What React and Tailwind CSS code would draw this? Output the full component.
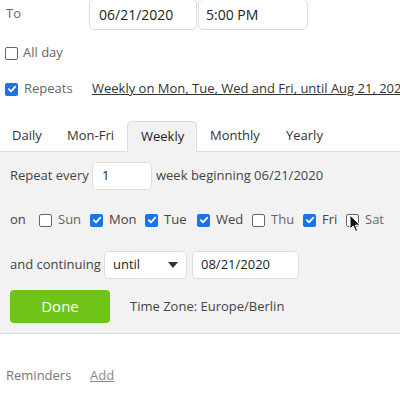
import React from "react";

function Check({ on }) {
  return on ? (
    <span className="inline-flex items-center justify-center w-[13px] h-[13px] rounded-[2px] bg-[#1a73e8] shrink-0">
      <svg width="10" height="10" viewBox="0 0 10 10">
        <path d="M1.8 5.2 L4 7.3 L8.3 2.6" stroke="white" strokeWidth="1.8" fill="none" strokeLinecap="round" strokeLinejoin="round" />
      </svg>
    </span>
  ) : (
    <span className="inline-block w-[13px] h-[13px] rounded-[2px] border border-[#666] bg-white shrink-0" />
  );
}

function Day({ label, on, w }) {
  return (
    <div className={`flex items-center gap-[6px] shrink-0 ${w}`}>
      <Check on={on} />
      <span className={on ? "text-[#444]" : "text-[#666]"}>{label}</span>
    </div>
  );
}

export default function App() {
  return (
    <div className="w-[400px] h-[400px] overflow-hidden bg-white font-['Open_Sans',sans-serif] text-[13px] text-[#555] relative">
      <div className="flex items-center h-[30px] -mt-px">
        <span className="w-[89px] shrink-0 pl-[6px] text-[#666]">To</span>
        <div className="w-[108px] shrink-0 h-[31px] border border-[#ddd] rounded-[5px] flex items-center pl-[9px] text-[#222] text-[14px]">06/21/2020</div>
        <div className="w-[110px] shrink-0 h-[31px] border border-[#ddd] rounded-[5px] flex items-center pl-[7px] ml-px text-[#222] text-[14px]">5:00 PM</div>
      </div>
      <div className="flex items-center h-[16px] mt-[16px] pl-[5px] gap-[5px]">
        <Check on={false} />
        <span className="text-[#666]">All day</span>
      </div>
      <div className="flex items-center h-[16px] mt-[20px] pl-[5px]">
        <Check on={true} />
        <span className="ml-[6px] w-[68px] shrink-0 text-[#666]">Repeats</span>
        <span className="whitespace-nowrap underline text-[#333]">Weekly on Mon, Tue, Wed and Fri, until Aug 21, 2020</span>
      </div>
      <div className="flex items-end h-[31px] mt-[23px] text-[#333]">
        <div className="w-[55px] shrink-0 pl-[12px] h-[30px] flex items-center">Daily</div>
        <div className="w-[72px] shrink-0 pl-[12px] h-[30px] flex items-center">Mon-Fri</div>
        <div className="w-[70px] shrink-0 pl-[13px] h-[31px] flex items-center bg-[#f2f2f2] border border-b-0 border-[#ddd] rounded-t-[5px] text-[#222] relative z-10 -mb-px pb-px">Weekly</div>
        <div className="w-[76px] shrink-0 pl-[13px] h-[30px] flex items-center">Monthly</div>
        <div className="pl-[13px] h-[30px] flex items-center">Yearly</div>
      </div>
      <div className="bg-[#f2f2f2] border-t border-b border-[#ddd] h-[183px] px-[10px] text-[#444]">
        <div className="flex items-center mt-[10px] h-[28px]">
          <span className="w-[82px] shrink-0">Repeat every</span>
          <div className="w-[60px] shrink-0 h-[28px] bg-white border border-[#ddd] rounded-[5px] flex items-center pl-[9px] text-[#222]">1</div>
          <span className="ml-[4px] whitespace-nowrap">week beginning 06/21/2020</span>
        </div>
        <div className="flex items-center mt-[21px] h-[18px]">
          <span className="w-[29px] shrink-0">on</span>
          <Day label="Sun" on={false} w="w-[51px]" />
          <Day label="Mon" on={true} w="w-[55px]" />
          <Day label="Tue" on={true} w="w-[52px]" />
          <Day label="Wed" on={true} w="w-[55px]" />
          <Day label="Thu" on={false} w="w-[51px]" />
          <Day label="Fri" on={true} w="w-[43px]" />
          <Day label="Sat" on={false} w="w-[40px]" />
        </div>
        <div className="flex items-center mt-[22px] h-[28px]">
          <span className="w-[94px] shrink-0">and continuing</span>
          <div className="w-[83px] shrink-0 h-[28px] bg-white border border-[#ddd] rounded-[5px] flex items-center justify-between pl-[8px] pr-[8px] text-[#222]">
            <span>until</span>
            <svg width="10" height="6" viewBox="0 0 10 6"><path d="M0 0 L10 0 L5 6 Z" fill="#333" /></svg>
          </div>
          <div className="w-[107px] shrink-0 h-[28px] ml-[5px] bg-white border border-[#ddd] rounded-[5px] flex items-center pl-[8px] text-[#222]">08/21/2020</div>
        </div>
        <div className="flex items-center mt-[11px] h-[33px]">
          <div className="w-[100px] shrink-0 h-[33px] bg-[#6ec417] rounded-[4px] flex items-center justify-center text-white text-[15px]">Done</div>
          <span className="ml-[20px] text-[#444]">Time Zone: Europe/Berlin</span>
        </div>
      </div>
      <div className="flex items-center mt-[33px] h-[18px] pl-[6px]">
        <span className="w-[84px] shrink-0 text-[#777]">Reminders</span>
        <span className="underline text-[#888]">Add</span>
      </div>
      <svg className="absolute left-[349px] top-[214px]" width="12" height="19" viewBox="0 0 12 19">
        <path d="M1 1 L1 15 L4.3 12 L6.6 17.5 L8.6 16.6 L6.4 11.2 L11 11.2 Z" fill="#111" stroke="white" strokeWidth="1" strokeLinejoin="round" />
      </svg>
    </div>
  );
}
